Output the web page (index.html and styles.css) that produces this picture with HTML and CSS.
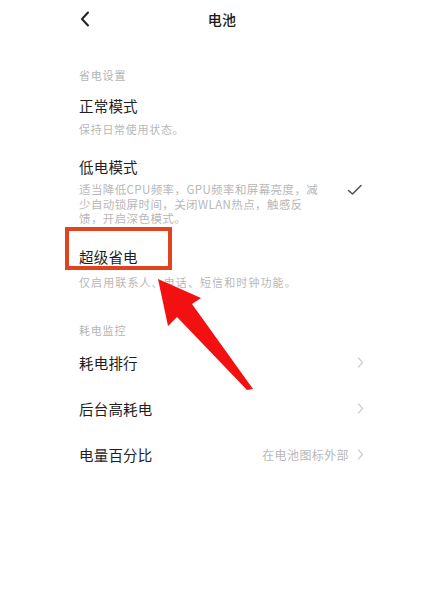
FILE: index.html
```html
<!DOCTYPE html>
<html lang="zh">
<head>
<meta charset="utf-8">
<title>电池</title>
<link rel="stylesheet" href="styles.css">
</head>
<body>
<div class="page">
  <header class="topbar">
    <svg class="back" width="12" height="16" viewBox="0 0 12 16"><path d="M9 1.5 L3 8 L9 14.5" fill="none" stroke="#222" stroke-width="2" stroke-linecap="round" stroke-linejoin="round"/></svg>
    <div class="title">电池</div>
    <div></div>
  </header>

  <div class="section-head first">省电设置</div>

  <div class="item">
    <div class="texts">
      <div class="name">正常模式</div>
      <div class="desc">保持日常使用状态。</div>
    </div>
  </div>

  <div class="item gap-l">
    <div class="texts">
      <div class="name">低电模式</div>
      <div class="desc multi">适当降低CPU频率，GPU频率和屏幕亮度，减<br>少自动锁屏时间，关闭WLAN热点，触感反<br>馈，开启深色模式。</div>
    </div>
    <svg class="check" width="16" height="12" viewBox="0 0 16 12"><path d="M1.5 6.5 L5.5 10 L14 1.5" fill="none" stroke="#555" stroke-width="1.6" stroke-linecap="round" stroke-linejoin="round"/></svg>
  </div>

  <div class="item gap-super">
    <div class="texts">
      <div class="name">超级省电</div>
      <div class="desc super">仅启用联系人、电话、短信和时钟功能。</div>
    </div>
  </div>

  <div class="section-head second">耗电监控</div>

  <div class="item row">
    <div class="name">耗电排行</div>
    <svg class="chev" width="7" height="11" viewBox="0 0 7 11"><path d="M1.5 1 L5.5 5.5 L1.5 10" fill="none" stroke="#cfcfcf" stroke-width="1.3" stroke-linecap="round" stroke-linejoin="round"/></svg>
  </div>
  <div class="item row">
    <div class="name">后台高耗电</div>
    <svg class="chev" width="7" height="11" viewBox="0 0 7 11"><path d="M1.5 1 L5.5 5.5 L1.5 10" fill="none" stroke="#cfcfcf" stroke-width="1.3" stroke-linecap="round" stroke-linejoin="round"/></svg>
  </div>
  <div class="item row">
    <div class="name">电量百分比</div>
    <div class="right">
      <span class="value">在电池图标外部</span>
      <svg class="chev" width="7" height="11" viewBox="0 0 7 11"><path d="M1.5 1 L5.5 5.5 L1.5 10" fill="none" stroke="#cfcfcf" stroke-width="1.3" stroke-linecap="round" stroke-linejoin="round"/></svg>
    </div>
  </div>

  <div class="highlight"></div>
  <svg class="arrow" width="443" height="594" viewBox="0 0 443 594">
    <polygon points="158,279 201,298 192,304 253,389 247,390 177,317 168,326" fill="#f21010"/>
  </svg>
</div>
</body>
</html>
```

FILE: styles.css
```css
html, body {
  margin: 0;
  padding: 0;
  background: #ffffff;
}

body {
  font-family: "Noto Sans CJK SC", "Noto Sans", sans-serif;
  color: #1e1e1e;
}

.page {
  position: relative;
  width: 443px;
  height: 594px;
  padding: 0 78px 0 79px;
  box-sizing: border-box;
  overflow: hidden;
}

.topbar {
  height: 38px;
  display: grid;
  grid-template-columns: 1fr auto 1fr;
  align-items: center;
}

.title {
  font-size: 14px;
  font-weight: 500;
  letter-spacing: 0.3px;
  line-height: 20px;
  color: #1a1a1a;
}

.section-head {
  font-size: 11px;
  letter-spacing: 0.8px;
  line-height: 16px;
  color: #b4b4b4;
}

.section-head.first {
  margin-top: 29px;
}

.section-head.second {
  margin-top: 32px;
}

.item {
  display: flex;
  align-items: center;
  justify-content: space-between;
}

.section-head.first + .item {
  margin-top: 13px;
}

.name {
  font-size: 14.5px;
  letter-spacing: 0.2px;
  line-height: 20px;
  color: #1e1e1e;
}

.desc {
  margin-top: 5px;
  font-size: 11px;
  letter-spacing: 0.7px;
  line-height: 16px;
  color: #b8b8b8;
}

.desc.multi {
  font-size: 11.5px;
  letter-spacing: 0.4px;
  line-height: 14.5px;
  white-space: nowrap;
}

.desc.super {
  margin-top: 7px;
  letter-spacing: 1.1px;
}

.gap-l {
  margin-top: 20px;
}

.gap-super {
  margin-top: 21px;
}

.check {
  margin-right: 2px;
  margin-top: -2px;
}

.section-head.second + .item.row {
  margin-top: 15px;
}

.item.row {
  height: 20px;
}

.item.row + .item.row {
  margin-top: 26px;
}

.chev {
  margin-right: 1px;
}

.right {
  display: flex;
  align-items: center;
  gap: 8px;
}

.value {
  font-size: 12px;
  letter-spacing: 0.4px;
  color: #b8b8b8;
}

.highlight {
  position: absolute;
  left: 65px;
  top: 227px;
  width: 107px;
  height: 43px;
  box-sizing: border-box;
  border: 4px solid #e2431f;
}

.arrow {
  position: absolute;
  left: 0;
  top: 0;
  pointer-events: none;
}
```
